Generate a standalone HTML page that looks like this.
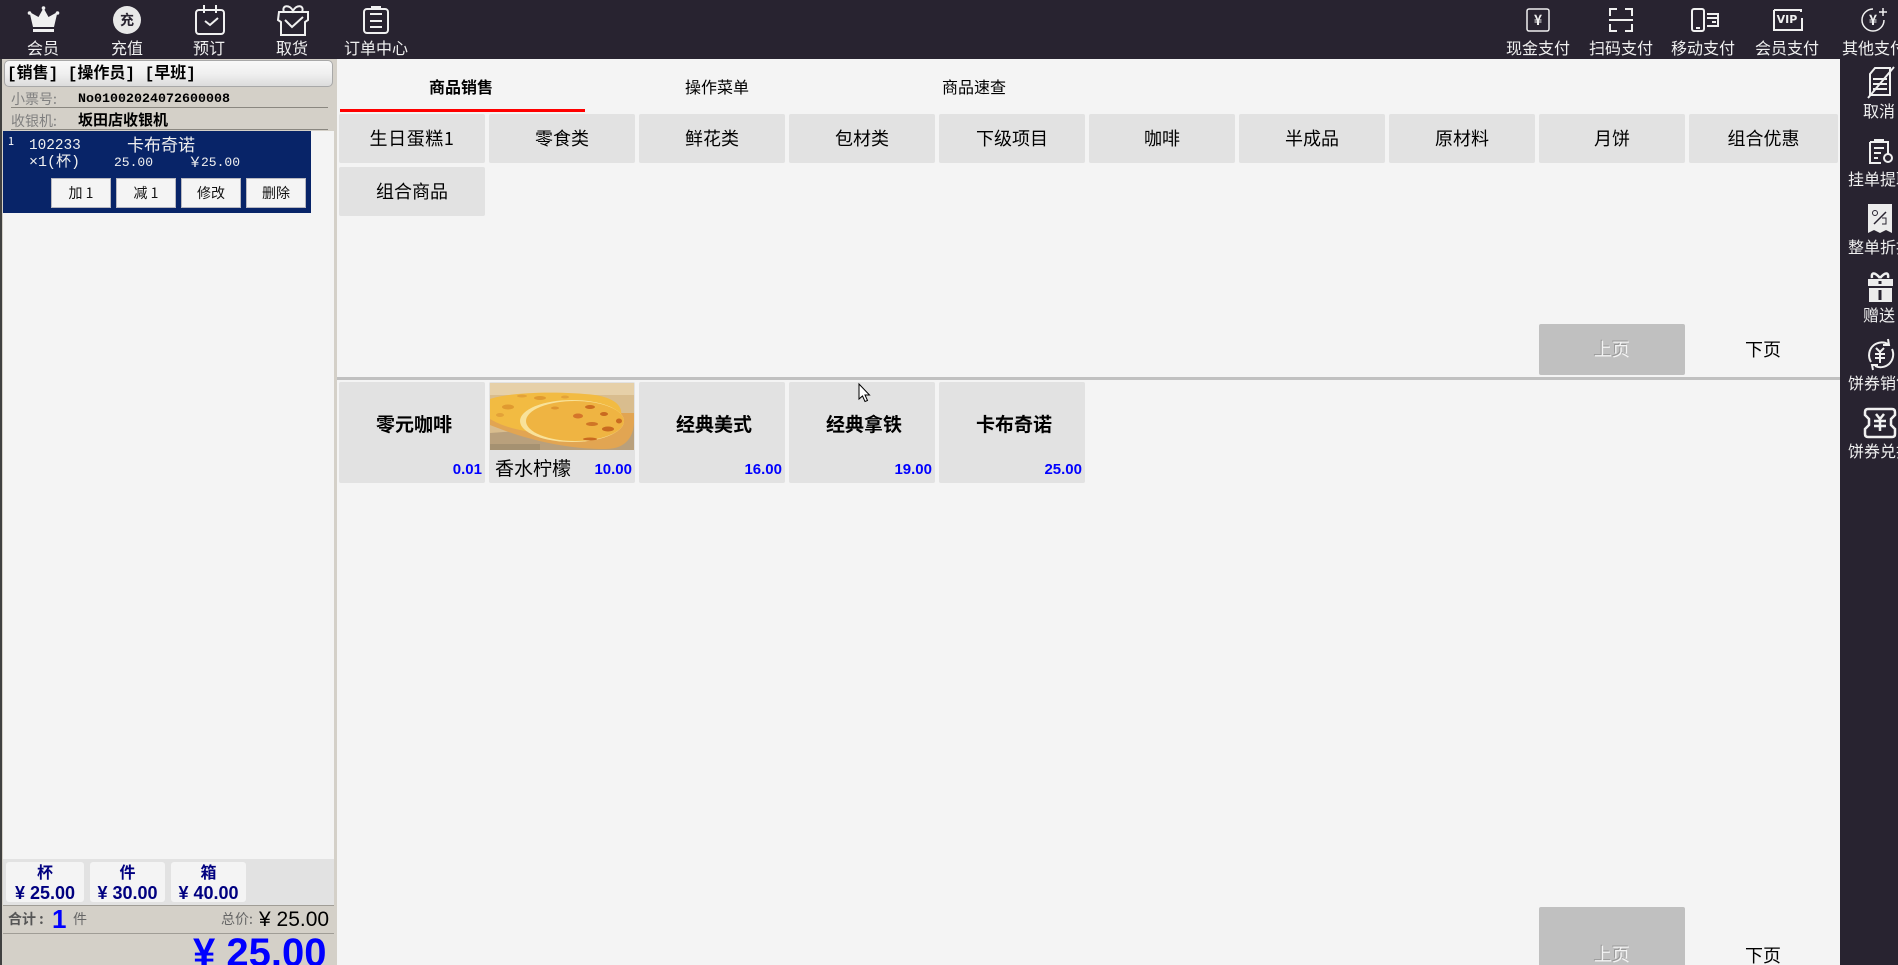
<!DOCTYPE html>
<html lang="zh"><head><meta charset="utf-8"><title>POS</title>
<style>
html,body{margin:0;padding:0;width:1898px;height:965px;overflow:hidden;background:#f4f4f4}
body{position:relative;font-family:"WenQuanYi Zen Hei","Noto Sans CJK SC",sans-serif;color:#000}
div,span.a{position:absolute;box-sizing:border-box}
.t{white-space:nowrap;text-align:center;transform:translateX(-50%)}
.w{color:#f0f0f0;font-size:16px;line-height:18px}
.mono{font-family:"Liberation Mono","WenQuanYi Zen Hei","Noto Sans CJK SC",monospace}
svg{position:absolute;overflow:visible}
.s{fill:none;stroke:#f0f0f0;stroke-width:2}
.c{background:#e2e2e2;border-radius:2px;width:146px;height:49px;font-size:18px;line-height:49px;text-align:center}
.p{background:#e2e2e2;border-radius:2px;top:382px;width:146px;height:101px}
.n{font-weight:bold;font-size:19px;line-height:22px;top:31px;left:2px;width:100%;text-align:center}
.m{font:bold 15px "Liberation Sans",sans-serif;color:#0000ff;position:absolute;right:3px;bottom:6px;line-height:14px}
.b{top:178px;width:60px;height:30px;background:#f4f4f4;border:1px solid #b8b8c0;font-size:14px;line-height:28px;text-align:center;color:#111}
.u{top:862px;height:40px;background:#f4f4f4;border-radius:3px;color:#000080;text-align:center;font-weight:bold}
.u i{display:block;font-style:normal;font-size:16px;line-height:18px}
.u b{display:block;font:bold 18px/27px "Liberation Sans",sans-serif}
.g{color:#808080;font-size:14px;line-height:16px;white-space:nowrap}
</style></head><body>

<!-- top bar -->
<div style="left:0;top:0;width:1898px;height:59px;background:#282330"></div>
<div style="left:1840px;top:59px;width:58px;height:906px;background:#282330"></div>

<!-- icons -->
<svg style="left:0;top:0" width="420" height="59">
<path d="M43.5 8l5 9 9-5-3.500 15H33l-3.500-15 9 5z" fill="#f0f0f0"/><circle cx="29.500" cy="13" r="1.800" fill="#f0f0f0"/><circle cx="57.500" cy="13" r="1.800" fill="#f0f0f0"/><circle cx="43.500" cy="8" r="1.800" fill="#f0f0f0"/><rect x="33" y="29" width="21" height="3" fill="#f0f0f0"/>
<circle cx="127" cy="20" r="14" fill="#e8e8e8"/>
<rect class="s" x="196" y="10" width="28" height="24" rx="3"/><path class="s" d="M204 5v8M216 5v8M205 21l5 4 8-7"/>
<path class="s" d="M279 12h29v8l-3 2v13h-24v-13l-3-2zM284 12c-3-7 6-8 9-1 3-7 12-6 9 1M285 20l7 7 11-10"/>
<rect class="s" x="364" y="9" width="24" height="24" rx="3"/><path class="s" d="M370 14h12M370 21h12M370 27h12"/><rect x="371" y="6" width="10" height="4" fill="#f0f0f0"/>
<!-- right icons -->
<rect class="s" x="1527" y="9" width="22" height="22" rx="2" style="stroke-width:1.500"/>
<path class="s" d="M1610 16V9h7M1625 9h7v7M1609 20h24M1610 24v7h7M1625 31h7v-7"/>
<rect class="s" x="1692" y="9" width="12" height="22" rx="2"/><path d="M1696 28h4" stroke="#f0f0f0" stroke-width="2"/><path class="s" d="M1707 14h11v12h-11M1707 18h11M1712 22h4"/>
<path class="s" d="M1774 10h27v2M1802 18v12h-28V10"/>
<path class="s" d="M1884 20a11 11 0 1 1-11-11M1879 12h8M1883 8v8" style="stroke-width:1.500"/>
<!-- sidebar icons -->
<path class="s" d="M1875 68h15v27h-20V74zM1873 79h14M1873 84h14M1873 89h14M1868 98l26-31"/>
<path class="s" d="M1870 142h18v12M1881 163h-11v-21M1874 148h10M1874 153h7M1874 158h4"/><rect x="1874" y="139" width="10" height="4" fill="#f0f0f0"/><circle class="s" cx="1888" cy="158" r="4"/>
<path d="M1868 204h24v29l-6-3-6 3-6-3-6 3z" fill="#ececec"/><path d="M1874 224l12-12" stroke="#282330" stroke-width="1.500"/><circle cx="1875" cy="213" r="2.500" fill="none" stroke="#282330"/><path d="M1882 218h4v6h-4" fill="none" stroke="#282330"/>
<rect x="1869" y="288" width="23" height="14" fill="#ececec"/><rect x="1868" y="279" width="25" height="7" fill="#ececec"/><path d="M1880 290v10" stroke="#282330" stroke-width="3"/><path d="M1880 281v3" stroke="#282330" stroke-width="3"/><path class="s" d="M1880 278c-6-7-9-5-8 0M1880 278c6-7 9-5 8 0" style="stroke-width:2.500"/>
<path class="s" d="M1871 362a13 13 0 0 1 3-17 13 13 0 0 1 14-1M1892 349a13 13 0 0 1-3 15 13 13 0 0 1-14 2M1888 339l1 6-6 0M1873 370l-1-5 6 0"/><path class="s" d="M1876 348l4 4 4-4M1875 354h10M1875 358h10M1880 352v11" style="stroke-width:2"/>
<path class="s" d="M1868 409h24c2 0 3 1 3 3v3l-4 4v6l4 4v5c0 2-1 3-3 3h-24c-2 0-3-1-3-3v-5l4-4v-6l-4-4v-3c0-2 1-3 3-3z" style="stroke-width:2.500"/><path class="s" d="M1876 414l4 5 4-5M1874 421h12M1874 426h12M1880 419v12" style="stroke-width:2.500"/>
</svg>

<span class="a t" style="left:127px;top:12px;font-size:14px;line-height:16px;color:#282330;font-weight:bold">充</span>
<span class="a t" style="left:1538px;top:12px;font-size:14px;line-height:16px;color:#f0f0f0;font-weight:bold">¥</span>
<span class="a t" style="left:1787px;top:13px;font:bold 11px/14px 'DejaVu Sans',sans-serif;color:#f0f0f0">VIP</span>
<span class="a t" style="left:1873px;top:12px;font-size:14px;line-height:16px;color:#f0f0f0;font-weight:bold">¥</span>

<!-- top text -->
<span class="a t w" style="left:43px;top:38px">会员</span>
<span class="a t w" style="left:127px;top:38px">充值</span>
<span class="a t w" style="left:209px;top:38px">预订</span>
<span class="a t w" style="left:292px;top:38px">取货</span>
<span class="a t w" style="left:376px;top:38px">订单中心</span>
<span class="a t w" style="left:1538px;top:38px">现金支付</span>
<span class="a t w" style="left:1621px;top:38px">扫码支付</span>
<span class="a t w" style="left:1703px;top:38px">移动支付</span>
<span class="a t w" style="left:1787px;top:38px">会员支付</span>
<span class="a t w" style="left:1874px;top:38px">其他支付</span>
<span class="a t w" style="left:1879px;top:101px">取消</span>
<span class="a t w" style="left:1880px;top:169px">挂单提取</span>
<span class="a t w" style="left:1880px;top:237px">整单折扣</span>
<span class="a t w" style="left:1879px;top:305px">赠送</span>
<span class="a t w" style="left:1880px;top:373px">饼券销售</span>
<span class="a t w" style="left:1880px;top:441px">饼券兑换</span>

<!-- left panel -->
<div style="left:0;top:59px;width:337px;height:906px;background:#d4d0c8;border-left:2px solid #404040"></div>
<div class="mono" style="left:4px;top:60px;width:329px;height:27px;border:1px solid #a8a8a8;border-radius:5px;background:linear-gradient(#f8f8f8,#f0f0f0 50%,#dcdcdc);font-size:16px;font-weight:bold;line-height:27px;padding-left:2px;white-space:pre">[销售] [操作员] [早班]</div>
<span class="a g" style="left:11px;top:91px">小票号:</span>
<span class="a mono" style="left:78px;top:92px;font-size:13.33px;font-weight:bold;line-height:16px;white-space:nowrap">No01002024072600008</span>
<div style="left:11px;top:107px;width:317px;height:1px;background:#8a8780"></div>
<span class="a g" style="left:11px;top:113px">收银机:</span>
<span class="a" style="left:78px;top:111px;font-size:15px;font-weight:bold;line-height:18px;white-space:nowrap">坂田店收银机</span>
<div style="left:11px;top:129px;width:317px;height:1px;background:#8a8780"></div>

<div style="left:3px;top:131px;width:331px;height:728px;background:#f4f4f4"></div>
<div style="left:3px;top:131px;width:308px;height:82px;background:#082468"></div>
<span class="a" style="left:8px;top:135px;color:#fff;font-size:11px;line-height:13px">1</span>
<span class="a mono" style="left:29px;top:138px;color:#f0f0f0;font-size:14.4px;line-height:17px;white-space:nowrap">102233</span>
<span class="a" style="left:127px;top:134px;color:#f0f0f0;font-size:17px;line-height:19px;white-space:nowrap">卡布奇诺</span>
<span class="a mono" style="left:29px;top:154px;color:#f0f0f0;font-size:15px;line-height:17px;white-space:nowrap">×1(杯)</span>
<span class="a mono" style="left:114px;top:154px;color:#f0f0f0;font-size:13px;line-height:17px;white-space:nowrap">25.00</span>
<span class="a" style="left:188px;top:154px;color:#f0f0f0;font-size:14px;line-height:17px;white-space:nowrap">￥</span>
<span class="a mono" style="left:201px;top:154px;color:#f0f0f0;font-size:13px;line-height:17px;white-space:nowrap">25.00</span>
<div class="b" style="left:51px">加 1</div>
<div class="b" style="left:116px">减 1</div>
<div class="b" style="left:181px">修改</div>
<div class="b" style="left:246px">删除</div>

<div style="left:3px;top:859px;width:331px;height:46px;background:#e2e2e2"></div>
<div class="u" style="left:6px;width:78px"><i>杯</i><b>¥ 25.00</b></div>
<div class="u" style="left:90px;width:75px"><i>件</i><b>¥ 30.00</b></div>
<div class="u" style="left:171px;width:75px"><i>箱</i><b>¥ 40.00</b></div>
<div style="left:3px;top:905px;width:331px;height:1px;background:#a09d96"></div>
<div style="left:3px;top:933px;width:331px;height:1px;background:#a09d96"></div>
<span class="a" style="left:8px;top:911px;color:#555;font-size:14px;font-weight:bold;line-height:16px;white-space:nowrap">合计 :</span>
<span class="a" style="left:52px;top:905px;color:#0000ff;font:bold 26px/28px 'Liberation Sans',sans-serif">1</span>
<span class="a" style="left:73px;top:911px;color:#666;font-size:14px;line-height:16px">件</span>
<span class="a" style="left:221px;top:911px;color:#666;font-size:14px;line-height:16px;white-space:nowrap">总价:</span>
<span class="a" style="left:259px;top:907px;font:21px/25px 'Liberation Sans',sans-serif;white-space:nowrap">¥ 25.00</span>
<span class="a" style="left:193px;top:930px;color:#0000ff;font:bold 40px/46px 'Liberation Sans',sans-serif;white-space:nowrap">¥ 25.00</span>

<!-- tabs -->
<span class="a t" style="left:461px;top:77px;font-size:16px;font-weight:bold;line-height:18px">商品销售</span>
<span class="a t" style="left:717px;top:77px;font-size:16px;line-height:18px">操作菜单</span>
<span class="a t" style="left:974px;top:77px;font-size:16px;line-height:18px">商品速查</span>
<div style="left:340px;top:109px;width:245px;height:3px;background:#ff0000"></div>

<!-- categories -->
<div class="c" style="left:339px;top:114px;letter-spacing:.6px">生日蛋糕1</div>
<div class="c" style="left:489px;top:114px">零食类</div>
<div class="c" style="left:639px;top:114px">鲜花类</div>
<div class="c" style="left:789px;top:114px">包材类</div>
<div class="c" style="left:939px;top:114px">下级项目</div>
<div class="c" style="left:1089px;top:114px">咖啡</div>
<div class="c" style="left:1239px;top:114px">半成品</div>
<div class="c" style="left:1389px;top:114px">原材料</div>
<div class="c" style="left:1539px;top:114px">月饼</div>
<div class="c" style="left:1689px;top:114px;width:149px">组合优惠</div>
<div class="c" style="left:339px;top:167px">组合商品</div>

<div style="left:1539px;top:324px;width:146px;height:51px;background:#c0c0c0;border-radius:2px;color:#f4f4f4;font-size:18px;line-height:51px;text-align:center;text-shadow:-1px -1px 0 #999">上页</div>
<span class="a t" style="left:1763px;top:339px;font-size:18px;line-height:21px">下页</span>
<div style="left:337px;top:377px;width:1503px;height:3px;background:#c0c0c0"></div>

<!-- products -->
<div class="p" style="left:339px"><div class="n">零元咖啡</div><span class="m">0.01</span></div>
<div class="p" style="left:489px">
<svg style="left:1px;top:1px" width="144" height="67" viewBox="0 0 144 67">
<rect width="144" height="67" fill="#d9bd8e"/>
<rect width="144" height="12" fill="#e6d0a8"/>
<path d="M0 50L144 40V67H0z" fill="#b9a07c"/>
<path d="M0 42C30 54 70 66 115 66C134 66 143 56 144 40V30H0z" fill="#e2a552"/>
<path d="M0 16C20 9 70 8 105 12C125 15 135 24 130 36L60 50C30 50 10 42 0 36z" fill="#f2bb42"/>
<ellipse cx="18" cy="24" rx="6" ry="2.500" fill="#e09a30"/><ellipse cx="50" cy="15" rx="6" ry="2" fill="#e09a30"/><ellipse cx="32" cy="13" rx="5" ry="1.500" fill="#e3a238"/><ellipse cx="10" cy="32" rx="4" ry="2" fill="#e3a238"/><ellipse cx="75" cy="14" rx="4" ry="1.500" fill="#e3a238"/>
<ellipse cx="82" cy="38" rx="52" ry="21" fill="#f8e29a"/>
<ellipse cx="85" cy="38" rx="49" ry="20" fill="#efb442"/>
<ellipse cx="100" cy="24" rx="5" ry="2" fill="#cc6d20"/><ellipse cx="88" cy="33" rx="5" ry="2.500" fill="#d5752a"/><ellipse cx="114" cy="31" rx="4" ry="2" fill="#c96a20"/><ellipse cx="118" cy="46" rx="6" ry="2.500" fill="#c96a20"/><ellipse cx="102" cy="41" rx="6" ry="2" fill="#cf7526"/><ellipse cx="100" cy="56" rx="7" ry="1.500" fill="#c96a20"/><ellipse cx="129" cy="38" rx="3" ry="2.500" fill="#c96a20"/><ellipse cx="65" cy="25" rx="4" ry="1.500" fill="#dd9430"/>
<rect y="61" width="50" height="6" fill="#9c8a6c" opacity=".7"/>
</svg>
<span style="position:absolute;left:6px;top:75px;font-size:19px;line-height:22px;white-space:nowrap">香水柠檬</span><span class="m">10.00</span></div>
<div class="p" style="left:639px"><div class="n">经典美式</div><span class="m">16.00</span></div>
<div class="p" style="left:789px"><div class="n">经典拿铁</div><span class="m">19.00</span></div>
<div class="p" style="left:939px"><div class="n">卡布奇诺</div><span class="m">25.00</span></div>

<!-- cursor -->
<svg style="left:858px;top:383px" width="14" height="20"><path d="M1 1v15l3.500-3 2.500 5.500 2.500-1-2.500-5.500h4.500z" fill="#fff" stroke="#000"/></svg>

<!-- bottom pagination -->
<div style="left:1539px;top:907px;width:146px;height:58px;background:#c0c0c0;border-radius:2px 2px 0 0;color:#f4f4f4;font-size:18px;text-align:center;text-shadow:-1px -1px 0 #999;line-height:21px;padding-top:37px;overflow:hidden">上页</div>
<span class="a t" style="left:1763px;top:945px;font-size:18px;line-height:21px">下页</span>
</body></html>
